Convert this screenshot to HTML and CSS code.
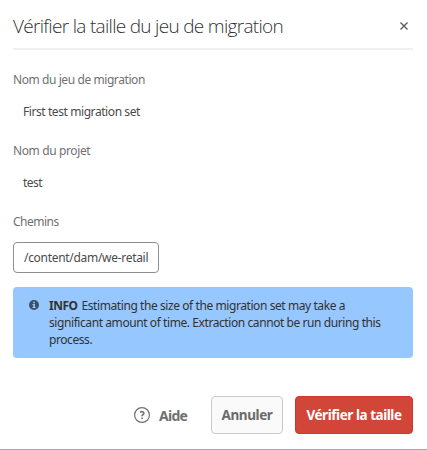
FILE: index.html
```html
<!DOCTYPE html>
<html lang="fr">
<head>
<meta charset="utf-8">
<title>Vérifier la taille du jeu de migration</title>
<link rel="stylesheet" href="styles.css">
</head>
<body>
<main class="dialog" role="dialog">
  <header class="header">
    <h1 class="title">Vérifier la taille du jeu de migration</h1>
    <button class="close" aria-label="Fermer"><svg width="10" height="10" viewBox="0 0 10 10"><path d="M1.5 1.5l7 7M8.5 1.5l-7 7"/></svg></button>
  </header>
  <section class="content">
    <div class="field"><div class="label name-label">Nom du jeu de migration</div><div class="value name-value">First test migration set</div></div>
    <div class="field"><div class="label project-label">Nom du projet</div><div class="value test-value">test</div></div>
    <div class="field"><div class="label paths-label">Chemins</div><div class="path"><span>/content/dam/we-retail</span></div></div>
    <div class="alert">
      <svg class="info" width="10" height="10" viewBox="0 0 10 10"><circle cx="5" cy="5" r="5"/><path d="M4.2 1.8h1.7v1.4H4.2zM3.5 4.1h2.4v3h.7v1H3.5v-1h.7v-2h-.7z"/></svg>
      <p class="message"><span class="line line-one"><b>INFO</b>Estimating the size of the migration set may take a</span> <span class="line line-two">significant amount of time. Extraction cannot be run during this</span> <span class="line">process.</span></p>
    </div>
  </section>
  <footer class="footer">
    <button class="help"><svg width="16" height="16" viewBox="0 0 16 16"><circle cx="8" cy="8" r="7.4"/><path class="mark" d="M6 5.2c1.8-1 3.9-.6 3.9 1 0 1.4-1.9 1.5-1.9 3M8 10.5v1.6"/></svg><span>Aide</span></button>
    <button class="button cancel"><span>Annuler</span></button>
    <button class="button primary"><span>Vérifier la taille</span></button>
  </footer>
</main>
</body>
</html>
```
FILE: styles.css
```css
* { box-sizing: border-box; }
body { margin: 0; background: #fff; color: #4b4b4b; font: 12px/17px "Noto Sans", sans-serif; }
button { border: 0; background: none; padding: 0; margin: 0; font: inherit; color: inherit; white-space: nowrap; }
svg { display: block; flex: none; }
.dialog { height: 450px; padding: 0 14px 0 13px; border-bottom: 1px solid #a8a8a8; display: flex; flex-direction: column; }
.header { height: 50px; border-bottom: 2px solid #f0f0f0; display: flex; align-items: center; justify-content: space-between; padding: 4px 4px 0 0; }
.title { margin: 0; font-family: "Open Sans", "Noto Sans", sans-serif; font-size: 19px; line-height: 26px; font-weight: 300; color: #323232; white-space: nowrap; letter-spacing: -.69px; }
.close svg { fill: none; stroke: #5c5c5c; stroke-width: 1.4; }
.field { height: 71px; white-space: nowrap; }
.content { padding-top: 21px; }
.label { color: #707070; height: 17px; letter-spacing: -.42px; }
.project-label { letter-spacing: -.38px; }
.paths-label { letter-spacing: -.5px; }
.value { margin: 15px 0 0 10px; height: 17px; letter-spacing: -.42px; }
.test-value { letter-spacing: -.5px; }
.path { margin-top: 12px; width: 146px; height: 31px; border: 1px solid #8e8e8e; border-radius: 4px; padding: 6px 0 0 10px; letter-spacing: -.3px; }
.alert { margin-top: 3px; height: 71px; background: #96c7ff; border-radius: 4px; display: flex; padding: 10px 0 0 16px; gap: 10px; color: #323232; }
.info { margin-top: 3px; fill: #3c5066; }
.info path { fill: #96c7ff; }
.message { margin: 0; white-space: nowrap; }
.line { display: block; letter-spacing: -.42px; }
.line b { margin-right: 4px; letter-spacing: -.5px; }
.footer { display: flex; margin-top: 38px; height: 38px; justify-content: flex-end; }
.help { display: flex; align-items: center; gap: 9px; margin-right: 24px; font-size: 14px; font-weight: 700; color: #707070; letter-spacing: -.8px; }
.help svg { fill: none; stroke: #707070; stroke-width: 1.2; }
.help .mark { stroke-width: 1.6; }
.button { height: 38px; border-radius: 4px; font-size: 13.5px; font-weight: 700; }
.cancel { width: 72px; margin-right: 12px; border: 1px solid #cacaca; background: #fafafa; color: #6b6b6b; letter-spacing: -.4px; }
.primary { width: 118px; background: #d14638; border: 1px solid #c9382b; color: #fff; letter-spacing: -.45px; }
```
